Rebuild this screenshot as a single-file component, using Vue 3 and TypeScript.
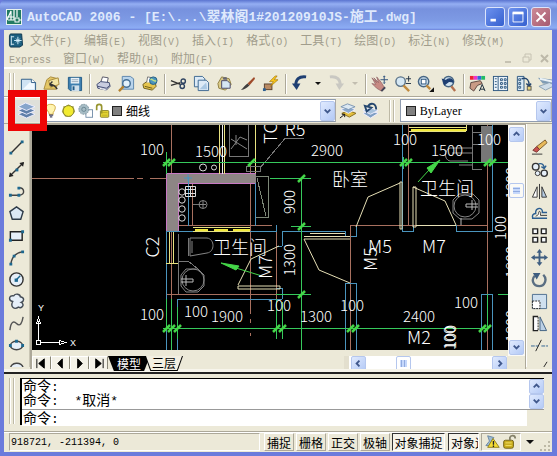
<script setup lang="ts">
import { ref } from 'vue'

interface MenuEntry { label: string; key: string }
interface Dim { x: number; y: number; t: string; r?: number; cls?: string }

const menuTop: MenuEntry[] = [
  { label: '文件', key: '(F)' },
  { label: '编辑', key: '(E)' },
  { label: '视图', key: '(V)' },
  { label: '插入', key: '(I)' },
  { label: '格式', key: '(O)' },
  { label: '工具', key: '(T)' },
  { label: '绘图', key: '(D)' },
  { label: '标注', key: '(N)' },
  { label: '修改', key: '(M)' },
]
const menuBottom: MenuEntry[] = [
  { label: '', key: 'Express' },
  { label: '窗口', key: '(W)' },
  { label: '帮助', key: '(H)' },
  { label: '附加', key: '(F)' },
]

const icons: Record<string, string> = {
  new: '<path d="M1.500 4.500H12L16.500 8V16.500H1.500Z" fill="#cfe2f3" stroke="#2d5b86"/><path d="M3 15L12 6L15 9V15Z" fill="#f3f9ff"/><path d="M12 4.500V8H16.500" fill="#fff" stroke="#2d5b86"/>',
  open: '<path d="M1 15L4 5L8 2L16 4L14 15Z" fill="#e4c766" stroke="#a88a3c"/><path d="M6 6L16 3L17 10L8 13Z" fill="#f4e6a4" stroke="#a88a3c"/><path d="M15 15C13 11 10 10 7 10M7 10L10 7M7 10L10 12" fill="none" stroke="#333" stroke-width="1.500"/>',
  save: '<path d="M2.500 2.500H16.500V16.500H4.500L2.500 14.500Z" fill="#3e7fb0" stroke="#205a87"/><rect x="5" y="3" width="9" height="6" fill="#e8f1f8"/><rect x="6" y="11" width="8" height="6" fill="#cfdfeb"/><rect x="7" y="12" width="2" height="4" fill="#205a87"/><path d="M6 5H13M6 7H13" stroke="#9ab"/>',
  print: '<path d="M6 8L8 2L14 3L13 8" fill="#fff" stroke="#556"/><path d="M2 10L6 7L15 8L16 12L12 16L3 14Z" fill="#c9cde0" stroke="#404a72"/><path d="M3 12L12 14L16 11" fill="none" stroke="#404a72"/><path d="M5 14L12 16" stroke="#fff"/>',
  preview: '<path d="M4.500 1.500H13L16.500 4V15H4.500Z" fill="#b9d4eb" stroke="#5b86ad"/><circle cx="9" cy="9" r="4" fill="#e2f1fb" stroke="#456f95" stroke-width="1.500"/><path d="M6 12L1 17" stroke="#b4812e" stroke-width="2.500"/>',
  publish: '<path d="M2 10L6 7L15 8L16 12L12 16L3 14Z" fill="#e5c54d" stroke="#6b5b1d"/><path d="M6 8L7 2L12 3L12 8" fill="#fff" stroke="#777"/><circle cx="13" cy="6" r="4" fill="#4c95bd" stroke="#255f82"/><path d="M10 5C12 3 13 8 16 6" stroke="#bfe08a" stroke-width="1.500" fill="none"/><path d="M4 12L12 14" stroke="#6b5b1d"/>',
  cut: '<path d="M1 6L11 10M1 11L11 8" stroke="#333" stroke-width="1.500"/><circle cx="14" cy="6.500" r="2.300" fill="none" stroke="#2f4461" stroke-width="1.500"/><circle cx="13" cy="12" r="2.300" fill="none" stroke="#2f4461" stroke-width="1.500"/>',
  copy: '<path d="M1.500 1.500H10L12.500 4V12.500H1.500Z" fill="#dceaf6" stroke="#3c6790"/><path d="M5.500 5.500H14L16.500 8V16.500H5.500Z" fill="#dceaf6" stroke="#3c6790"/><path d="M7 15L14 8L15 15Z" fill="#a9c8e3"/>',
  paste: '<path d="M2 9L6 2L14 4L16 10L10 16L3 14Z" fill="#dccb88" stroke="#8e7e42"/><path d="M6 6H12L15 9V14H6Z" fill="#d6e6f2" stroke="#446"/><path d="M7 3L11 2L12 5L8 5Z" fill="#667"/>',
  brush: '<path d="M16 2L9 9L11 11L17 4Z" fill="#9f4b2b"/><path d="M9 9L11 11C8 14 6 15 2 16C5 13 6 11 9 9Z" fill="#3f3f3f"/>',
  block: '<rect x="2.500" y="9.500" width="8" height="6" fill="#b98a63" stroke="#58402c"/><path d="M14 1L8 7H12L9 12L17 5H13L16 1Z" fill="#f9c71b" stroke="#a3750a" stroke-width=".7"/><rect x="1" y="14" width="3" height="3" fill="#2d5f91"/>',
  undo: '<path d="M16 2C8 1 5 5 5 11" fill="none" stroke="#1e3f72" stroke-width="3"/><path d="M1 9H10L6 16Z" fill="#1e3f72"/>',
  redo: '<path d="M2 2C10 1 13 5 13 11" fill="none" stroke="#c9c8c2" stroke-width="3"/><path d="M8 9H17L12 16Z" fill="#c9c8c2"/>',
  pan: '<path d="M1 3L6 8L3 3L8 8L6 2L11 8L14 13L11 17L6 14L1 9L5 10Z" fill="#c78a83" stroke="#8b5c60" stroke-width=".7"/><path d="M14 1V9M10 5H18M13 2L14 1L15 2M13 8L14 9L15 8" stroke="#2c4f7a" fill="none"/><path d="M11 17L15 13" stroke="#445" stroke-width="2"/>',
  zoom: '<circle cx="7" cy="7" r="5" fill="#d6e8f4" stroke="#5a7288" stroke-width="1.500"/><path d="M10 11L16 17" stroke="#c08a3e" stroke-width="2.500"/><path d="M15.500 1V7M12.500 4H18M12.500 9H18" stroke="#234"/>',
  zoomwin: '<circle cx="7" cy="7" r="5.500" fill="#cfe2f0" stroke="#486683" stroke-width="1.500"/><rect x="4.500" y="4.500" width="5" height="5" fill="#fff" stroke="#264f78"/><path d="M10 11L14 15" stroke="#c08a3e" stroke-width="2.500"/><path d="M18 13V18H13Z" fill="#111"/>',
  zoomprev: '<circle cx="9" cy="7" r="5.500" fill="#cfe2f0" stroke="#486683" stroke-width="1.500"/><path d="M14 8C13 3 8 3 6 7M3 5L5 10L9 7Z" fill="#1e3f72" stroke="#1e3f72" stroke-width="1.500"/><path d="M12 12L16 17" stroke="#b4704e" stroke-width="2.500"/>',
  props: '<path d="M1 1H5V5H1Z" fill="#e23"/><path d="M5 1H9V5H5Z" fill="#e3c"/><path d="M9 1H13V5H9Z" fill="#36d"/><path d="M13 1H17V5H13Z" fill="#2b6"/><path d="M2 8L12 6L14 9L9 11L5 17L1 14Z" fill="#c99a85" stroke="#5b4540"/><path d="M11 17L14 10L17 17M12 15H16" stroke="#123" fill="none"/>',
  design: '<rect x="1.500" y="1.500" width="15" height="15" fill="#edf4fa" stroke="#2d5780"/><path d="M6.500 2V16" stroke="#2d5780"/><path d="M3 4H5M3 7H5M3 10H5M3 13H5" stroke="#2d5780"/><path d="M9 4H11V6H9ZM13 4H15V6H13ZM9 8H11V10H9ZM13 8H15V10H13ZM9 12H11V14H9ZM13 12H15V14H13Z" fill="none" stroke="#2d5780"/>',
  palette: '<path d="M2.500 1.500H9.500V16.500H2.500Z" fill="#dcebf7" stroke="#2d5780"/><path d="M4 4H6V6H4ZM4 8H6V10H4ZM4 12H6V14H4Z" fill="#fff" stroke="#2d5780"/><path d="M7 4C13 2 15 6 15 11M12 9L15 12L17 9" fill="none" stroke="#24466e" stroke-width="1.500"/><rect x="13" y="12" width="4" height="4" fill="#e7d47a" stroke="#555"/>',
  sheets: '<path d="M0 3L16 5V10L5 9Z" fill="#7f9cb5"/><path d="M1 12L12 8L18 11L8 16Z" fill="#cfdde8" stroke="#8aa0b4"/><path d="M2 4L15 7" stroke="#e9f1f7" stroke-width="2"/>',
  layers: '<path d="M0 13L9 9L18 13L9 17Z" fill="#5f7fa9" stroke="#eef"/><path d="M0 9L9 5L18 9L9 13Z" fill="#5f7fa9" stroke="#eef"/><path d="M0 5L8 1L18 5L9 9Z" fill="#86a5cb" stroke="#eef"/>',
  layercur: '<path d="M3 12L10 9L18 12L11 16Z" fill="#e2bd3c" stroke="#846a1c"/><path d="M2 8L10 5L17 8L10 12Z" fill="#8ba9cb" stroke="#eef"/><path d="M2 5L9 2L17 5L10 8Z" fill="#dce8f2" stroke="#7a95b2"/><path d="M1 17L6 13M3 13H6V16" stroke="#111" fill="none"/>',
  layerprev: '<path d="M1 12L9 9L17 12L9 17Z" fill="#7f9fc3" stroke="#eef"/><path d="M1 9L9 6L17 9L9 13Z" fill="#a5c0db" stroke="#eef"/><path d="M15 8C15 1 9 0 6 5M3 4L5 10L10 6Z" fill="none" stroke="#24466e" stroke-width="2"/>',
  bulb: '<path d="M5 10C0 3 4 1 8 1C13 1 16 4 11 11V13H6V11Z" fill="#fff4b0" stroke="#c79b2a"/><path d="M6 14H11M7 16H10" stroke="#446" stroke-width="1.500"/>',
  sun: '<path d="M9 1L12 3L15 3L16 7L17 10L14 13L12 16L9 16L5 16L3 13L1 10L2 7L3 3L6 3Z" fill="#b5b25b"/><circle cx="9" cy="9" r="6.500" fill="#f2eb30" stroke="#777529"/>',
  freeze: '<rect x="9.500" y="7.500" width="8" height="9" fill="#fff" stroke="#6482a0"/><circle cx="7" cy="7" r="6" fill="#a6bcc5" stroke="#738b96" stroke-dasharray="2 1"/><circle cx="7" cy="7" r="2.500" fill="none" stroke="#637f8c"/>',
  lock: '<rect x="6.500" y="8.500" width="10" height="8" rx="1" fill="#e7d736" stroke="#79741d"/><path d="M2 8V4C2 0 8 0 8 4V12" fill="none" stroke="#97952f" stroke-width="2"/><path d="M8 11H15M8 14H15" stroke="#b3a61f"/>',
  line: '<path d="M3 15L15 3" stroke="#333" stroke-width="1.500"/><path d="M1.500 13.500H4.500V16.500H1.500ZM13.500 1.500H16.500V4.500H13.500Z" fill="#1d688f"/>',
  xline: '<path d="M2 16L16 2" stroke="#333" stroke-width="1.500"/><path d="M1 17L2 12L6 16ZM17 1L12 2L16 6Z" fill="#222"/><rect x="8" y="8" width="3" height="3" fill="#1d688f"/>',
  pline: '<path d="M2 13H12C19 12 17 5 12 5" fill="none" stroke="#444" stroke-width="1.500"/><path d="M1 11.500H4V14.500H1ZM10 11.500H13V14.500H10ZM10 4H13V7H10Z" fill="#1d688f"/>',
  polygon: '<path d="M9 2L16 7L13.500 15H4.500L2 7Z" fill="#dbe8f4" stroke="#2e3b48" stroke-width="1.500"/>',
  rect: '<path d="M2.500 5H15V14H2.500Z" fill="#e6eff8" stroke="#222" stroke-width="1.500"/><path d="M1 12.500H4V15.500H1ZM14 3.500H17V6.500H14Z" fill="#1d688f"/>',
  arc: '<path d="M3 16C4 9 8 4 15 3" fill="none" stroke="#444" stroke-width="1.500"/><path d="M1.500 14.500H4.500V17.500H1.500ZM5 6H8V9H5ZM14 1.500H17V4.500H14Z" fill="#1d688f"/>',
  circle: '<circle cx="9" cy="9" r="7" fill="#e6eff8" stroke="#333" stroke-width="1.500"/><path d="M8 10L13 5" stroke="#1d688f" stroke-width="1.500"/><rect x="7" y="8" width="3.500" height="3.500" fill="#1d688f"/>',
  cloud: '<path d="M5 9C0 8 1 2 6 3C8 0 13 1 13 4C18 5 17 9 14 10C18 12 15 17 11 15C7 18 2 15 5 9Z" fill="#e6eff8" stroke="#444c55" stroke-width="1.500"/>',
  spline: '<path d="M2 16C3 7 6 6 9 9C13 13 15 8 16 2" fill="none" stroke="#555" stroke-width="1.500"/>',
  ellipse: '<ellipse cx="9" cy="9" rx="6.500" ry="4.500" fill="#e6eff8" stroke="#444" stroke-width="1.500"/><path d="M1 7.500H4V10.500H1ZM14 7.500H17V10.500H14ZM7.500 3H10.500V6H7.500Z" fill="#1d688f"/>',
  earc: '<path d="M3 11C1 3 16 2 16 10" fill="#e6eff8" stroke="#444" stroke-width="1.500"/><rect x="2" y="9" width="3" height="3" fill="#1d688f"/>',
  erase: '<path d="M15 1L17 4L9 11L6 8Z" fill="#e8b95a" stroke="#7a5a2a"/><path d="M6 8L9 11L6 14L2 12Z" fill="#c8524f" stroke="#733"/><path d="M1 16H12" stroke="#333"/>',
  mcopy: '<circle cx="5" cy="6" r="3.500" fill="#e6eff8" stroke="#333" stroke-width="1.500"/><circle cx="7" cy="13" r="2.500" fill="#e6eff8" stroke="#333"/><circle cx="14" cy="13" r="3.300" fill="#e6eff8" stroke="#333" stroke-width="1.500"/><path d="M8 3C12 2 14 4 14 8M11 6L14 8L16 5" stroke="#2d5f91" fill="none" stroke-width="1.500"/>',
  mirror: '<path d="M6.500 4V15H1.500Z" fill="#fff" stroke="#333"/><path d="M11.500 4V15H16.500Z" fill="#b7cde4" stroke="#333"/><path d="M9 1V17" stroke="#333"/>',
  offset: '<path d="M1 14H17M2 14C0 9 5 9 5 9C4 2 13 2 12 8H17" fill="none" stroke="#2d5f91" stroke-width="1.500"/><path d="M5 12C6 11 8 11 8 9C8 6 10 6 10 9V11H17" fill="#fff" stroke="#333"/>',
  array: '<path d="M2 2H7V7H2ZM11 2H16V7H11ZM2 11H7V16H2ZM11 11H16V16H11Z" fill="#f7fafd" stroke="#222" stroke-width="1.500"/>',
  move: '<path d="M9 3V15M3 9H15" stroke="#3e5d80" stroke-width="2"/><path d="M9 0L12 4H6ZM9 18L12 14H6ZM0 9L4 6V12ZM18 9L14 6V12Z" fill="#3e5d80"/>',
  rotate: '<path d="M13 4C18 9 14 16 9 16C2 16 0 9 4 5" fill="none" stroke="#5a6e82" stroke-width="2.500"/><path d="M2 2H10L6 9Z" fill="#3e5d80"/>',
  scale: '<path d="M1.500 1.500H16.500V16.500H1.500Z" fill="#cfe0ef" stroke="#4c6d8e"/><path d="M1.500 8.500H9.500V16.500H1.500Z" fill="#fff" stroke="#222" stroke-dasharray="2 1"/>',
  stretch: '<path d="M7.500 1.500H2.500V16.500H7.500" fill="#fff" stroke="#222" stroke-width="1.500"/><path d="M7.500 2V16" stroke="#222" stroke-dasharray="2 1"/><path d="M9.500 2L16.500 16.500H9.500Z" fill="#bcd1e6" stroke="#3e5d80"/>',
  trim: '<path d="M0 9.500H8M11 9.500H18" stroke="#2d5f91" stroke-dasharray="4 1"/><path d="M5 15L11 3" stroke="#222"/>',
  extend: '<path d="M0 9H8" stroke="#222"/><path d="M9 9H14" stroke="#2d5f91" stroke-dasharray="2 1"/><path d="M12 11L17 3" stroke="#222"/>',
}

const toolbar: string[] = [
  'new', 'open', 'save', '|', 'print', 'preview', 'publish', '|', 'cut', 'copy', 'paste', 'brush', 'block', '|',
  'undo', 'v', 'redo', 'w', '|', 'pan', 'zoom', 'zoomwin', 'zoomprev', '|', 'props', 'design', 'palette', 'sheets',
]
const drawTools = ['line', 'xline', 'pline', 'polygon', 'rect', 'arc', 'circle', 'cloud', 'spline', 'ellipse', 'earc']
const modifyTools = ['erase', 'mcopy', 'mirror', 'offset', 'array', 'move', 'rotate', 'scale', 'stretch', 'trim', 'extend']
const layerState = ['bulb', 'sun', 'freeze', 'lock']
const navPaths = ['M4 2V12M12 2V12L6 7Z', 'M11 2V12L6 7Z', 'M7 2V12L12 7Z', 'M6 2V12L12 7ZM14 2V12']

const dims: Dim[] = [
  { x: 152, y: 156, t: '100' }, { x: 211, y: 158, t: '1500' }, { x: 327, y: 157, t: '2900' },
  { x: 405, y: 146, t: '100' }, { x: 447, y: 157, t: '1500' }, { x: 489, y: 146, t: '100' },
  { x: 152, y: 321, t: '100' }, { x: 196, y: 318, t: '100' }, { x: 227, y: 323, t: '1900' },
  { x: 279, y: 312, t: '100' }, { x: 316, y: 323, t: '1300' }, { x: 352, y: 312, t: '100' },
  { x: 419, y: 323, t: '2400' }, { x: 466, y: 309, t: '100' },
  { x: 380, y: 254, t: 'M5', cls: 'big' }, { x: 434, y: 254, t: 'M7', cls: 'big' }, { x: 419, y: 345, t: 'M2', cls: 'big' },
  { x: 295, y: 137, t: 'R5', cls: 'big' },
  { x: 295, y: 203, t: '900', r: -90 }, { x: 295, y: 261, t: '1300', r: -90 },
  { x: 159, y: 248, t: 'C2', r: -90, cls: 'big' }, { x: 272, y: 268, t: 'M7', r: -90, cls: 'big' },
  { x: 377, y: 260, t: 'M5', r: -90, cls: 'big' }, { x: 277, y: 134, t: 'TC', r: -90, cls: 'big' },
  { x: 506, y: 229, t: '100', r: -90 }, { x: 455, y: 339, t: '100', r: -90 }, { x: 456, y: 338, t: '100', r: -90 },
  { x: 517, y: 184, t: '1800', r: -90 }, { x: 517, y: 263, t: '1800', r: -90 }, { x: 517, y: 327, t: '1800', r: -90 },
]
const rooms: Dim[] = [
  { x: 350, y: 187, t: '卧室' }, { x: 447, y: 196, t: '卫生间' }, { x: 240, y: 255, t: '卫生间' },
]
const ticks: [number, number][] = [
  [166, 163], [171, 163], [251, 163], [403, 163], [408, 163], [487, 163], [492, 163],
  [166, 329], [171, 329], [177, 329], [276, 329], [282, 329], [350, 329], [355, 329], [482, 329], [487, 329],
  [301, 179], [301, 227], [301, 295],
]

const layer = ref('细线')
const color = ref('ByLayer')
const command = ref('')
const modes = ['捕捉', '栅格', '正交', '极轴']
</script>

<template>
  <div class="window">
    <header class="title">
      <svg class="logo" viewBox="0 0 16 16"><rect x=".5" y=".5" width="15" height="15" fill="#217a63" stroke="#e6f2ee" /><path d="M1 11L5 2V11M1 8H8M8 1V11H2M11 1V8" fill="none" stroke="#fff" stroke-width="1.200" /><rect x="9" y="9" width="4" height="4" fill="#217a63" stroke="#fff" /><path d="M13 11H16" stroke="#fff" /></svg>
      <h1>AutoCAD 2006 - [E:\...\<b>翠林阁</b>1#20120910JS-<b>施工</b>.dwg]</h1>
      <div class="winbtns">
        <button class="wb" aria-label="最小化"><svg viewBox="0 0 20 20"><path d="M5 13.500H11" stroke="#fff" stroke-width="3" /></svg></button>
        <button class="wb" aria-label="最大化"><svg viewBox="0 0 20 20"><path d="M4.500 5V15.500H15.500V5" fill="none" stroke="#fff" /><path d="M4 5.500H16" stroke="#fff" stroke-width="3" /></svg></button>
        <button class="wb close" aria-label="关闭"><svg viewBox="0 0 20 20"><path d="M5 5L15 15M15 5L5 15" stroke="#fff" stroke-width="2" /></svg></button>
      </div>
    </header>

    <div class="body">
      <nav class="menu">
        <div class="menurow">
          <svg class="doc" viewBox="0 0 16 16"><path d="M2 1H14L15 13L12 15H2L1 13V3Z" fill="#1c5f80" stroke="#12384f" /><path d="M3 3V13M3 4H6M3 12H6" stroke="#d9edf6" /><path d="M10 4V12M6 8H14M8 6L12 10M12 6L8 10" stroke="#d9f2ff" /></svg>
          <a v-for="m in menuTop" :key="m.key" href="#">{{ m.label }}<i>{{ m.key }}</i></a>
        </div>
        <div class="menurow second">
          <a v-for="m in menuBottom" :key="m.key" href="#">{{ m.label }}<i>{{ m.key }}</i></a>
          <svg class="mdi" viewBox="0 0 46 12"><path d="M2 10H8" stroke="#c6c2b2" stroke-width="2" /><path d="M20 5H26V10H20ZM22 5V2H28V8H26" fill="none" stroke="#c6c2b2" /><path d="M38 3L45 10M45 3L38 10" stroke="#bdb9a9" stroke-width="2" /></svg>
        </div>
      </nav>

      <div class="toolbar">
        <span class="grip"></span>
        <template v-for="(t, i) in toolbar" :key="i">
          <span v-if="t === '|'" class="sep"></span>
          <button v-else-if="t === 'v' || t === 'w'" class="caret" :class="{ off: t === 'w' }" aria-label="列表"></button>
          <button v-else class="tool" :aria-label="t"><svg viewBox="0 0 18 18" v-html="icons[t]"></svg></button>
        </template>
      </div>

      <div class="layerbar">
        <div class="layerbtn">
          <button class="tool" aria-label="图层特性管理器"><svg viewBox="0 0 18 18" v-html="icons.layers"></svg></button>
          <span class="mark"></span>
        </div>
        <div class="combo layercombo">
          <svg v-for="s in layerState" :key="s" class="state" viewBox="0 0 18 18" v-html="icons[s]"></svg>
          <span class="swatch"></span>
          <select v-model="layer" aria-label="图层"><option>细线</option></select>
          <span class="drop"><svg viewBox="0 0 14 14"><path d="M4 5L7 8L10 5" /></svg></span>
        </div>
        <button class="tool" aria-label="置为当前图层"><svg viewBox="0 0 18 18" v-html="icons.layercur"></svg></button>
        <button class="tool" aria-label="上一个图层"><svg viewBox="0 0 18 18" v-html="icons.layerprev"></svg></button>
        <span class="grip double"></span>
        <div class="combo colorcombo">
          <span class="swatch"></span>
          <select v-model="color" class="serif" aria-label="颜色"><option>ByLayer</option></select>
          <span class="drop"><svg viewBox="0 0 14 14"><path d="M4 5L7 8L10 5" /></svg></span>
        </div>
      </div>

      <main class="work">
        <div class="side">
          <button v-for="t in drawTools" :key="t" :aria-label="t"><svg viewBox="0 0 18 18" v-html="icons[t]"></svg></button>
        </div>

        <section class="sheet">
          <div class="viewrow">
            <svg class="drawing" viewBox="32 126 476 225" preserveAspectRatio="xMinYMin slice">
              <g class="ln" fill="none">
                <path stroke="#a8705f" d="M32 179.500H134M137 179.500H143M150 179.500H166M171.500 126V351M192.500 185V227M250.500 163V315M250.500 320V324M250.500 334V337M276.500 226V329M178 226.500H272M166 295.500H276M350.500 226V351M408.500 126V226M487.500 126V351M351 226.500H487" />
                <path stroke="#8d8585" stroke-width="10" d="M176 179.500H256" />
                <path stroke="#8d8585" stroke-width="11" d="M172.500 174V232" />
                <path stroke="#c878c4" d="M166.500 232V174.500H256M178.500 232V184.500H256M166 232.500H178" />
                <path stroke="#777" stroke-width="11" d="M486.500 127V163" />
                <path stroke="#4a94bd" d="M166.500 233V351M188.500 178V227M255.500 184V227M166 232.500H276V226M282.500 247V232.500H345.500V237.500M277 247.500H282M282.500 289V300M177.500 351V300.500H282M276 289.500H282M402.500 126V232.500H413.500V226M492.500 126V232.500H456.500V226M345.500 351V284.500H356.500V351M350.500 237.500H356.500V226M481.500 351V295.500H492.500V351" />
                <path stroke="#e8e280" d="M219.500 126V175M224.500 126V175M255.500 126V174M193 228.500H250M193 232.500H250M169.500 233V264M173.500 233V264M166 264.500H178M409 128.500H466M409 132.500H466M466.500 126V132" />
                <path stroke="#f1e93c" stroke-width="2" d="M195 230.500H208M214 231H228M233 230.500H250M411 130.500H466" />
                <path stroke="#eee" d="M222.500 126V175" />
                <path stroke="#777" d="M229.500 126V157.500H248.500V126M246.500 167.500H260.500V172.500H246.500ZM260 169L285 139.500H304M178.500 235V295M178 262H188L198 270M188.500 239V257M192.500 205.500H200M472.500 127V170.500H481.500M472 145.500H481M472.500 133H481" />
                <path stroke="#7d8878" d="M256 177.500H268.500V218.500H256M257 179L266 217M268 177V218" />
                <path stroke="#36c95c" d="M163 163.500H508M166.500 153V175M301.500 179V351M270 179.500H311M291 227.500H311M276 295.500H311M163 329.500H487M177.500 308V340M276.500 300V340M282.500 303V340M171.500 300V351M166.500 300V329M498 295.500H508M403.500 158V170M487.500 295V329" />
              </g>
              <g fill="none" stroke="#858585">
                <path d="M231 150L240 138L247 141M231 140L247 150M236 136V146" />
                <path d="M190 239H207C215 240 215 253 207 254L190 257ZM192 242V254" />
                <path d="M186 270H198L204 276V287L198 293H186L181 287V276Z" /><circle cx="193" cy="281" r="11" /><path d="M181 280H193V283H181M186 276V287" stroke="#bbb" />
                <path d="M459 195H473L479 201V214L472 220H460L453 214V201Z" /><circle cx="465" cy="207" r="11" /><path d="M478 205H466V208H478M472 201V211M461 219V226" stroke="#bbb" />
                <path d="M472 149H450C444 151 444 161 450 162H468M459 166H472M452 154H472" />
                <circle cx="203" cy="205.500" r="4" /><path d="M199 205.500H206M203 202V209" />
              </g>
              <g fill="none" stroke="#e6dfb5">
                <path d="M279 247L251 260L238 286M238 287H280V290H238Z" />
                <path d="M400 184L368 198L356 228M400 183H402V230H400Z" />
                <path d="M413 188L445 202L456 226M413 188H416V228H413ZM416 226.500H456" />
                <path d="M350 240H304L319 271L350 284M304 237.500H350M310 234.500H345" />
              </g>
              <g fill="none" stroke="#ddd">
                <circle cx="203" cy="168.500" r="3.500" /><circle cx="214" cy="168.500" r="2.500" />
                <circle v-for="y in [193, 201, 210, 219]" :key="y" cx="182" :cy="y" r="3.200" />
                <path d="M185.500 187.500H195.500V197.500H185.500ZM185 190.500H196M185 194.500H196M190.500 187V197" />
              </g>
              <path d="M188 175V182M184 179H192" stroke="#4a94bd" />
              <g stroke="#44d648" fill="#44d648">
                <path d="M262 277L236 269M221 264L239 267L236 271ZM418 183L429 171M440 161L427 169L431 174Z" />
                <path v-for="(k, i) in ticks" :key="i" :d="`M${k[0] - 3} ${k[1] + 4}L${k[0] + 4} ${k[1] - 3}`" stroke-width="2.500" />
              </g>
              <text v-for="(d, i) in dims" :key="'d' + i" class="dim" :class="d.cls" :transform="`translate(${d.x} ${d.y}) rotate(${d.r ?? 0})`">{{ d.t }}</text>
              <text v-for="(d, i) in rooms" :key="'r' + i" class="room" :x="d.x" :y="d.y">{{ d.t }}</text>
              <g class="ln" fill="none" stroke="#fff"><path d="M36.500 341.500H40.500V345.500H36.500ZM38.500 341V322M36.500 324.500H40.500L38.500 318.500ZM41 343.500H59M59.500 341.500V345.500L65.500 343.500Z" /></g>
              <text class="ucs" x="41" y="312">Y</text><text class="ucs" x="73" y="347">X</text>
            </svg>
            <div class="vscroll">
              <button class="sb" aria-label="向上"><svg viewBox="0 0 14 14"><path d="M4 8L7 5L10 8" /></svg></button>
              <span class="thumb"></span>
              <button class="sb" aria-label="向下"><svg viewBox="0 0 14 14"><path d="M4 5L7 8L10 5" /></svg></button>
            </div>
          </div>
          <div class="tabs">
            <button v-for="(p, i) in navPaths" :key="i" class="nav" aria-label="布局导航"><svg viewBox="0 0 18 14"><path :d="p" fill="#000" stroke="#000" /></svg></button>
            <button class="tab on">模型</button>
            <button class="tab off"><span>三层</span></button>
            <span class="fill"></span>
            <div class="hscroll">
              <button class="sb" aria-label="向左"><svg viewBox="0 0 14 14"><path d="M8 4L5 7L8 10" /></svg></button>
              <span class="thumb h"></span>
              <button class="sb" aria-label="向右"><svg viewBox="0 0 14 14"><path d="M6 4L9 7L6 10" /></svg></button>
            </div>
          </div>
        </section>

        <div class="side right">
          <button v-for="t in modifyTools" :key="t" :aria-label="t"><svg viewBox="0 0 18 18" v-html="icons[t]"></svg></button>
        </div>
      </main>

      <section class="cmd">
        <span class="grip tall"></span>
        <div class="console">
          <div class="history">
            <div class="log"><p>命令<i>:</i></p><p>命令<i>:&nbsp; *</i>取消<i>*</i></p></div>
            <div class="cscroll">
              <button class="sb" aria-label="向上"><svg viewBox="0 0 14 14"><path d="M4 8L7 5L10 8" /></svg></button>
              <button class="sb" aria-label="向下"><svg viewBox="0 0 14 14"><path d="M4 5L7 8L10 5" /></svg></button>
            </div>
          </div>
          <div class="prompt"><label for="cmdline">命令<i>:</i></label><input id="cmdline" v-model="command" type="text" /></div>
        </div>
      </section>

      <footer class="status">
        <output class="coords">918721, -211394, 0</output>
        <button v-for="m in modes" :key="m" class="mode">{{ m }}</button>
        <button class="mode on">对象捕捉</button>
        <button class="mode on cut">对象追踪</button>
        <div class="tray">
          <svg viewBox="0 0 38 18"><path d="M4 2L11 4L8 8L12 13H2L6 8Z" fill="#9dbbd2" stroke="#6583a0" /><path d="M10 5L17 15H4Z" fill="#f6dd35" stroke="#8d7b14" /><path d="M10.500 8V12M10.500 13V14.500" stroke="#222" stroke-width="1.500" /><rect x="22" y="7" width="11" height="9" rx="2" fill="#c9ad1e" stroke="#6b5b10" /><path d="M24 10H31M24 13H31" stroke="#f4e36b" /><path d="M29 7V4C30 1 35 1 35 5" fill="none" stroke="#84816a" stroke-width="2" /></svg>
        </div>
        <button class="caret" aria-label="状态栏菜单"></button>
        <svg class="sizer" viewBox="0 0 12 12"><path d="M9 1H11V3H9ZM9 5H11V7H9ZM9 9H11V11H9ZM5 5H7V7H5ZM5 9H7V11H5ZM1 9H3V11H1Z" fill="#bdb9a6" /></svg>
      </footer>
    </div>
  </div>
</template>

<style>
body { margin: 0; background: #6775d6; }
</style>

<style scoped>
* { box-sizing: border-box; }
button { margin: 0; padding: 0; border: 0; background: none; color: inherit; font: inherit; display: block; }
svg { display: block; }
i { font: normal 10px "Liberation Mono", monospace; }
.window { display: flex; flex-direction: column; min-height: 100vh; padding: 0 5px 4px 4px; background: #6b7bdc; font: 12px/16px "Noto Sans CJK SC", sans-serif; color: #000; overflow: hidden; }
.title { display: flex; align-items: center; gap: 5px; height: 30px; flex: none; margin: 0 -5px 0 -4px; padding: 3px 6px 0; background: linear-gradient(#5b74d0, #94aef3 4px, #7791de 9px, #7d9ae4 20px, #8cacf4 28px, #6c83db); border-radius: 5px 5px 0 0; }
.logo { width: 16px; height: 16px; flex: none; }
h1 { flex: 1; margin: 0; font: bold 13px/18px "Liberation Mono", monospace; color: #dfe9fc; white-space: nowrap; overflow: hidden; }
h1 b { font: bold 14px/18px "Noto Sans CJK SC", sans-serif; }
.winbtns { display: flex; gap: 3px; }
.wb { width: 20px; height: 20px; border: 1px solid #dbe4fb; border-radius: 3px; background: linear-gradient(135deg, #6d92ee, #3560cf); }
.wb.close { background: linear-gradient(135deg, #cd8a96, #a65a70); }
.body { flex: 1; display: flex; flex-direction: column; background: #ece9d8; min-width: 0; }
.menu { height: 38px; flex: none; padding: 1px 0 0 4px; border-bottom: 1px solid #fff; color: #a19d8c; }
.menurow { display: flex; align-items: center; height: 18px; gap: 12px; white-space: nowrap; }
.menurow a { color: inherit; text-decoration: none; }
.menurow .doc { width: 16px; height: 15px; margin-right: -6px; }
.menurow.second { padding-left: 1px; }
.mdi { width: 46px; height: 12px; margin-left: auto; margin-right: 3px; }
.toolbar { display: flex; align-items: center; height: 29px; flex: none; padding: 2px 0 0 5px; border-bottom: 1px solid #aca899; overflow: hidden; border-top: 1px solid #fff; }
.grip { flex: none; width: 5px; height: 22px; margin-right: 3px; border: solid #bdb9a6; border-width: 0 1px; box-shadow: inset 1px 0 #fff, 1px 0 #fff; }
.grip.double { margin: 0 6px 0 7px; }
.tool { flex: none; width: 23px; height: 22px; display: grid; place-items: center; }
.tool svg { width: 17px; height: 17px; }
.sep { flex: none; width: 1px; height: 20px; margin: 0 2px 0 3px; background: #aca899; box-shadow: 1px 0 #fff; }
.caret { flex: none; width: 14px; height: 18px; display: grid; place-items: center; }
.caret::before { content: ""; border: 3px solid transparent; border-top-color: #111; border-bottom: 0; }
.caret.off::before { border-top-color: #c2beb0; }
.layerbar { display: flex; align-items: center; height: 27px; flex: none; padding-left: 11px; border-top: 1px solid #fff; border-bottom: 1px solid #aca899; }
.layerbtn { position: relative; width: 28px; flex: none; display: flex; background: #dfe0da; }
.mark { position: absolute; left: -7px; top: -10px; width: 39px; height: 41px; border: 7px solid #ee0505; z-index: 2; pointer-events: none; }
.combo { display: flex; align-items: center; height: 23px; background: #fff; border: 1px solid #8f9cb0; border-right-color: #aaa; min-width: 0; }
.layercombo { flex: 296 0 0; }
.colorcombo { flex: 148 0 0; padding-left: 5px; }
.state { flex: none; width: 15px; height: 16px; margin-right: 2px; }
.swatch { flex: none; width: 10px; height: 10px; border: 1px solid #222; background: #808080; }
select { flex: 1; min-width: 0; appearance: none; border: 0; margin: 0; padding: 0 4px; background: none; font: 12px/18px "Noto Sans CJK SC", sans-serif; color: #000; }
select.serif { font-family: "Liberation Serif", serif; }
.drop, .sb { flex: none; width: 15px; height: 15px; border: 1px solid #b5c7ee; border-radius: 2px; background: linear-gradient(135deg, #e0eafe, #b4caf6); }
.drop { height: 20px; padding-top: 3px; }
.drop svg, .sb svg { width: 13px; height: 13px; fill: none; stroke: #40588c; stroke-width: 2; }
.work { flex: 1 0 242px; display: flex; min-width: 0; overflow: hidden; }
.side { flex: none; width: 26px; display: flex; flex-direction: column; align-items: center; padding: 12px 2px 0 0; height: 243px; overflow: hidden; border-right: 1px solid #c9c5b4; }
.side button { flex: none; width: 22px; height: 22px; padding: 2px 3px; }
.side button svg { width: 17px; height: 17px; }
.side.right { border-right: 0; border-left: 1px solid #fff; }
.sheet { flex: 1; display: flex; flex-direction: column; min-width: 0; border: solid #aca899; border-width: 1px 1px 0 2px; }
.viewrow { flex: 1; display: flex; min-height: 0; }
.drawing { flex: 1; min-width: 0; height: 225px; background: #000; }
.ln { shape-rendering: crispEdges; }
.dim { font: 300 15px "Noto Sans CJK SC", sans-serif; fill: #fff; text-anchor: middle; }
.dim.big { font-size: 18px; }
.room { font: 300 18px "Noto Sans CJK SC", sans-serif; fill: #fff; text-anchor: middle; }
.ucs { font: 9px "Liberation Sans", sans-serif; fill: #fff; text-anchor: middle; }
.vscroll { flex: none; width: 17px; display: flex; flex-direction: column; align-items: center; justify-content: space-between; padding: 2px 0 1px; background: #fbfaf6; }
.thumb { width: 15px; height: 15px; margin-bottom: 102px; border: 1px solid #b5c7ee; border-radius: 2px; background: repeating-linear-gradient(#c6d8fb 0 1px, #91abe0 1px 2px, #c6d8fb 2px 3px) content-box #c6d8fb; padding: 3px; }
.thumb.h { margin: 0 50px 0 0; background: repeating-linear-gradient(90deg, #c6d8fb 0 1px, #91abe0 1px 2px, #c6d8fb 2px 3px) content-box #c6d8fb; }
.tabs { display: flex; height: 16px; flex: none; background: #ece9d8; }
.nav { flex: none; width: 19px; height: 15px; border: 1px solid; border-color: #fff #8b8878 #aca899 #fff; background: #f4f2e8; }
.nav svg { width: 17px; height: 13px; }
.tab { flex: none; font-size: 12px; line-height: 14px; height: 15px; }
.tab.on { width: 42px; background: #000; color: #fff; clip-path: polygon(0 0, 100% 0, 86% 100%, 14% 100%); }
.tab.off { width: 38px; margin-left: -5px; padding: 0 1px 1px; background: #000; clip-path: polygon(0 0, 100% 0, 86% 100%, 14% 100%); }
.tab.off span { display: block; height: 14px; background: #f2efe2; clip-path: polygon(0 0, 100% 0, 86% 100%, 14% 100%); }
.fill { flex: 163; }
.hscroll { flex: 158; display: flex; justify-content: space-between; background: #fff; border-left: 5px solid #e3dfce; padding-left: 2px; margin-right: 18px; }
.cmd { flex: none; display: flex; height: 59px; padding: 4px 8px 6px 5px; border-top: 2px solid #222; box-shadow: 0 -3px #f7f5ec; }
.grip.tall { height: 46px; }
.console { flex: 1; display: flex; flex-direction: column; min-width: 0; margin-left: 3px; border: solid #000; border-width: 1px 0 0 2px; }
.history { display: flex; height: 31px; background: #fff; border-bottom: 1px solid #999; }
.log { flex: 1; font-size: 14px; padding: 0 1px; }
.log p { margin: 0; line-height: 13px; height: 14px; }
.log i, .prompt i { font-size: 13px; line-height: 13px; }
.cscroll { display: flex; flex-direction: column; }
.prompt { display: flex; align-items: center; height: 16px; background: #fff; margin-right: 17px; padding-left: 1px; font-size: 14px; line-height: 14px; }
.prompt input { flex: 1; min-width: 0; height: 14px; border: 0; padding: 0 4px; background: none; outline: 0; font: inherit; }
.status { flex: none; display: flex; align-items: center; height: 21px; padding: 0 1px 0 5px; border-top: 1px solid #aca899; box-shadow: inset 0 1px #fff; white-space: nowrap; }
.coords { flex: 1; height: 18px; margin-right: 4px; padding-left: 1px; font: 10px/18px "Liberation Mono", monospace; border: 1px solid; border-color: #aca899 #fff #fff #aca899; }
.mode { flex: none; height: 18px; width: 30px; margin-right: 2px; border: 1px solid; border-color: #fff #aca899 #aca899 #fff; line-height: 15px; }
.mode.on { width: 53px; margin-right: 3px; border-color: #333 #fff #fff #333; background: #f5f3ea; }
.mode.cut { width: 31px; padding-left: 2px; overflow: hidden; text-align: left; margin-right: 2px; }
.tray { width: 40px; height: 18px; border: 1px solid; border-color: #aca899 #fff #fff #aca899; }
.tray svg { width: 38px; height: 16px; }
.status .caret { width: 18px; }
.status .caret::before { border-width: 4px 4px 0; }
.sizer { width: 12px; height: 12px; align-self: flex-end; }
</style>
